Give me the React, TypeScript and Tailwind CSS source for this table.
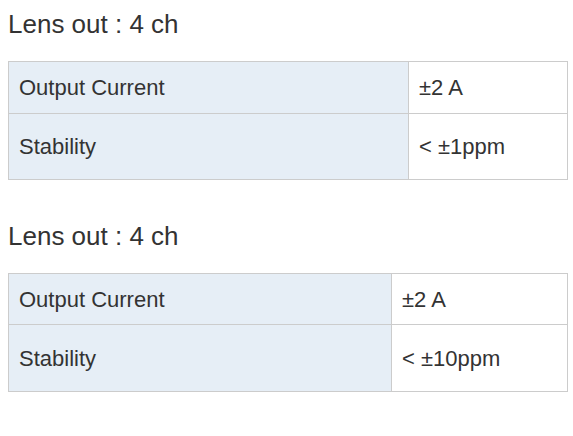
const specs = [
  {
    title: "Lens out : 4 ch",
    labelWidth: "w-[400px]",
    rows: [
      { label: "Output Current", value: "±2 A", height: "h-[52px]" },
      { label: "Stability", value: "< ±1ppm", height: "h-[66px]" },
    ],
  },
  {
    title: "Lens out : 4 ch",
    labelWidth: "w-[383px]",
    rows: [
      { label: "Output Current", value: "±2 A", height: "h-[51px]" },
      { label: "Stability", value: "< ±10ppm", height: "h-[67px]" },
    ],
  },
];

const SpecTable = ({ spec }: { spec: (typeof specs)[number] }) => {
  return (
    <div className="mb-10">
      <h2 className="text-[26px] leading-[32px] text-[#333]">{spec.title}</h2>
      <div className="mt-[21px] w-[560px] border-l border-t border-[#cccccc]">
        {spec.rows.map((row) => (
          <div key={row.label} className={`flex ${row.height}`}>
            <div
              className={`${spec.labelWidth} shrink-0 flex items-center pl-[10px] bg-[#e6eef6] border-r border-b border-[#cccccc]`}
            >
              {row.label}
            </div>
            <div className="flex-1 flex items-center pl-[10px] border-r border-b border-[#cccccc]">
              {row.value}
            </div>
          </div>
        ))}
      </div>
    </div>
  );
};

export default function App() {
  return (
    <div className="min-h-[436px] bg-white pt-2 pl-2 font-['Liberation_Sans',Arial,sans-serif] text-[22px] text-[#333]">
      {specs.map((spec, i) => (
        <SpecTable key={i} spec={spec} />
      ))}
    </div>
  );
}
